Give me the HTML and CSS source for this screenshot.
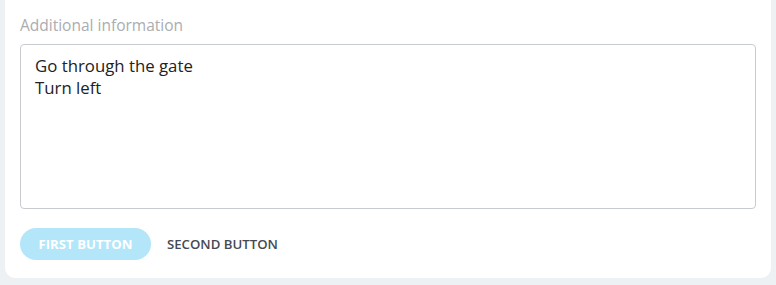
FILE: index.html
```html
<!DOCTYPE html>
<html>
<head>
<meta charset="utf-8">
<link rel="stylesheet" href="styles.css">
</head>
<body>
<div class="card">
  <label class="label" for="info">Additional information</label>
  <textarea id="info" class="field">Go through the gate
Turn left</textarea>
  <div class="actions">
    <button class="btn btn-primary" disabled>First button</button>
    <button class="btn btn-text">Second button</button>
  </div>
</div>
</body>
</html>
```
FILE: styles.css
```css
html, body {
  margin: 0;
  padding: 0;
  background: #eef1f4;
  font-family: "Open Sans", "Noto Sans", sans-serif;
}
body {
  padding: 0 5px;
  height: 285px;
  box-sizing: border-box;
}
.card {
  background: #fff;
  border-radius: 0 0 10px 10px;
  padding: 15px 15px 18px 15px;
  display: flex;
  flex-direction: column;
}
.label {
  font-size: 15.5px;
  color: #aaadb1;
  line-height: 20px;
  margin-bottom: 9px;
}
.field {
  display: block;
  box-sizing: border-box;
  width: 736px;
  height: 165px;
  border: 1px solid #c7cbd0;
  border-radius: 4px;
  padding: 10px 14px;
  font-family: "Open Sans", "Noto Sans", sans-serif;
  font-size: 16.8px;
  line-height: 22px;
  color: #222;
  resize: none;
  outline: none;
  margin: 0;
}
.actions {
  display: flex;
  align-items: center;
  gap: 6px;
  margin-top: 19px;
}
.btn {
  font-family: inherit;
  font-size: 13.2px;
  text-transform: uppercase;
  border: none;
  height: 32px;
  padding: 0 10px;
  border-radius: 16px;
  background: transparent;
  cursor: pointer;
}
.btn-primary {
  background: #b3e6f9;
  color: #fff;
  font-weight: 700;
  width: 131px;
}
.btn-text {
  color: #444a52;
  font-weight: 600;
}
```
